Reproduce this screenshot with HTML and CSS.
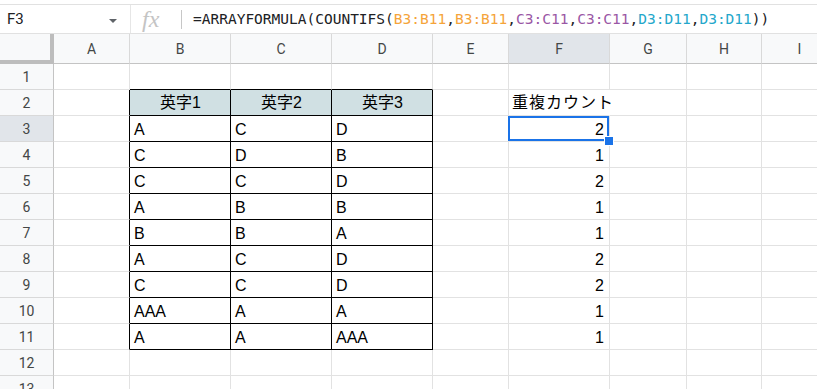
FILE: index.html
```html
<!DOCTYPE html>
<html lang="ja">
<head>
  <meta charset="UTF-8">
  <title>重複カウント</title>
  <link rel="stylesheet" href="styles.css">
</head>
<body>
  <div class="formula-bar">
    <div class="name-box">
      <span class="cell-ref">F3</span>
      <span class="caret"></span>
    </div>
    <div class="divider full"></div>
    <div class="fx">fx</div>
    <div class="divider"></div>
    <div class="formula">=ARRAYFORMULA(COUNTIFS(<span class="rng-b">B3:B11</span>,<span class="rng-b">B3:B11</span>,<span class="rng-c">C3:C11</span>,<span class="rng-c">C3:C11</span>,<span class="rng-d">D3:D11</span>,<span class="rng-d">D3:D11</span>))</div>
  </div>

  <div class="sheet">
    <div class="corner"></div>
    <div class="col-head">A</div>
    <div class="col-head">B</div>
    <div class="col-head">C</div>
    <div class="col-head">D</div>
    <div class="col-head">E</div>
    <div class="col-head active">F</div>
    <div class="col-head">G</div>
    <div class="col-head">H</div>
    <div class="col-head">I</div>

    <!-- row 1 -->
    <div class="row-head">1</div>
    <div class="cell"></div>
    <div class="cell edge-b"></div>
    <div class="cell edge-b"></div>
    <div class="cell edge-b"></div>
    <div class="cell"></div>
    <div class="cell"></div>
    <div class="cell"></div>
    <div class="cell"></div>
    <div class="cell"></div>

    <!-- row 2 -->
    <div class="row-head">2</div>
    <div class="cell edge-r"></div>
    <div class="cell boxed head">英字1</div>
    <div class="cell boxed head">英字2</div>
    <div class="cell boxed head">英字3</div>
    <div class="cell"></div>
    <div class="cell spill">重複カウント</div>
    <div class="cell"></div>
    <div class="cell"></div>
    <div class="cell"></div>

    <!-- row 3 -->
    <div class="row-head active">3</div>
    <div class="cell edge-r"></div>
    <div class="cell boxed">A</div>
    <div class="cell boxed">C</div>
    <div class="cell boxed">D</div>
    <div class="cell"></div>
    <div class="cell num selected">2<span class="sel-box"><span class="sel-handle"></span></span></div>
    <div class="cell"></div>
    <div class="cell"></div>
    <div class="cell"></div>

    <!-- row 4 -->
    <div class="row-head">4</div>
    <div class="cell edge-r"></div>
    <div class="cell boxed">C</div>
    <div class="cell boxed">D</div>
    <div class="cell boxed">B</div>
    <div class="cell"></div>
    <div class="cell num">1</div>
    <div class="cell"></div>
    <div class="cell"></div>
    <div class="cell"></div>

    <!-- row 5 -->
    <div class="row-head">5</div>
    <div class="cell edge-r"></div>
    <div class="cell boxed">C</div>
    <div class="cell boxed">C</div>
    <div class="cell boxed">D</div>
    <div class="cell"></div>
    <div class="cell num">2</div>
    <div class="cell"></div>
    <div class="cell"></div>
    <div class="cell"></div>

    <!-- row 6 -->
    <div class="row-head">6</div>
    <div class="cell edge-r"></div>
    <div class="cell boxed">A</div>
    <div class="cell boxed">B</div>
    <div class="cell boxed">B</div>
    <div class="cell"></div>
    <div class="cell num">1</div>
    <div class="cell"></div>
    <div class="cell"></div>
    <div class="cell"></div>

    <!-- row 7 -->
    <div class="row-head">7</div>
    <div class="cell edge-r"></div>
    <div class="cell boxed">B</div>
    <div class="cell boxed">B</div>
    <div class="cell boxed">A</div>
    <div class="cell"></div>
    <div class="cell num">1</div>
    <div class="cell"></div>
    <div class="cell"></div>
    <div class="cell"></div>

    <!-- row 8 -->
    <div class="row-head">8</div>
    <div class="cell edge-r"></div>
    <div class="cell boxed">A</div>
    <div class="cell boxed">C</div>
    <div class="cell boxed">D</div>
    <div class="cell"></div>
    <div class="cell num">2</div>
    <div class="cell"></div>
    <div class="cell"></div>
    <div class="cell"></div>

    <!-- row 9 -->
    <div class="row-head">9</div>
    <div class="cell edge-r"></div>
    <div class="cell boxed">C</div>
    <div class="cell boxed">C</div>
    <div class="cell boxed">D</div>
    <div class="cell"></div>
    <div class="cell num">2</div>
    <div class="cell"></div>
    <div class="cell"></div>
    <div class="cell"></div>

    <!-- row 10 -->
    <div class="row-head">10</div>
    <div class="cell edge-r"></div>
    <div class="cell boxed">AAA</div>
    <div class="cell boxed">A</div>
    <div class="cell boxed">A</div>
    <div class="cell"></div>
    <div class="cell num">1</div>
    <div class="cell"></div>
    <div class="cell"></div>
    <div class="cell"></div>

    <!-- row 11 -->
    <div class="row-head">11</div>
    <div class="cell edge-r"></div>
    <div class="cell boxed">A</div>
    <div class="cell boxed">A</div>
    <div class="cell boxed">AAA</div>
    <div class="cell"></div>
    <div class="cell num">1</div>
    <div class="cell"></div>
    <div class="cell"></div>
    <div class="cell"></div>

    <!-- row 12 -->
    <div class="row-head">12</div>
    <div class="cell"></div>
    <div class="cell"></div>
    <div class="cell"></div>
    <div class="cell"></div>
    <div class="cell"></div>
    <div class="cell"></div>
    <div class="cell"></div>
    <div class="cell"></div>
    <div class="cell"></div>

    <!-- row 13 -->
    <div class="row-head">13</div>
    <div class="cell"></div>
    <div class="cell"></div>
    <div class="cell"></div>
    <div class="cell"></div>
    <div class="cell"></div>
    <div class="cell"></div>
    <div class="cell"></div>
    <div class="cell"></div>
    <div class="cell"></div>
  </div>
</body>
</html>
```

FILE: styles.css
```css
* {
  box-sizing: border-box;
}
html, body {
  margin: 0;
  padding: 0;
  background: #fff;
  overflow: hidden;
}
body {
  width: 817px;
  height: 389px;
  font-family: 'Liberation Sans', Arial, 'Noto Sans CJK JP', sans-serif;
}

/* formula bar */
.formula-bar {
  margin-top: 4px;
  height: 30px;
  display: flex;
  align-items: center;
  border-top: 1px solid #e1e1e1;
  border-bottom: 1px solid #e1e1e1;
}
.name-box {
  width: 130px;
  height: 100%;
  display: flex;
  align-items: center;
  padding-left: 7px;
}
.cell-ref {
  font-family: Roboto, 'Liberation Sans', sans-serif;
  font-size: 15px;
  color: #202124;
  flex: 1;
}
.caret {
  width: 0;
  height: 0;
  border-left: 4px solid transparent;
  border-right: 4px solid transparent;
  border-top: 4px solid #5f6368;
  margin: 3px 13px 0 0;
}
.divider {
  width: 1px;
  height: 19px;
  background: #c7c7c7;
}
.divider.full {
  height: 100%;
  background: #e6e6e6;
}
.fx {
  width: 50px;
  padding-left: 11px;
  font-family: 'Liberation Serif', serif;
  font-style: italic;
  font-size: 24px;
  line-height: 24px;
  color: #c4c4c4;
}
.formula {
  padding-left: 11px;
  font-family: 'DejaVu Sans Mono', monospace;
  font-size: 14.5px;
  color: #202124;
  white-space: nowrap;
}
.rng-b { color: #f5a43a; }
.rng-c { color: #9a57a5; }
.rng-d { color: #24a7cb; }

/* grid */
.sheet {
  display: grid;
  grid-template-columns: 54px 76px 101px 101px 101px 76px 101px 77px 75px 76px;
  grid-template-rows: 30px repeat(13, 26px);
}
.corner {
  background: #f8f9fa;
  border-right: 4px solid #bdbdbd;
  border-bottom: 4px solid #bdbdbd;
}
.col-head {
  background: #f8f9fa;
  border-right: 1px solid #d9d9d9;
  border-bottom: 1px solid #c4c4c4;
  display: flex;
  align-items: center;
  justify-content: center;
  font-family: Roboto, 'Liberation Sans', sans-serif;
  font-size: 14px;
  color: #444746;
}
.row-head {
  background: #f8f9fa;
  border-right: 1px solid #c4c4c4;
  border-bottom: 1px solid #d9d9d9;
  display: flex;
  align-items: center;
  justify-content: center;
  font-family: Roboto, 'Liberation Sans', sans-serif;
  font-size: 14px;
  color: #444746;
}
.col-head.active,
.row-head.active {
  background: #e1e5ea;
}
.cell {
  position: relative;
  border-right: 1px solid #e2e2e2;
  border-bottom: 1px solid #e2e2e2;
  display: flex;
  align-items: flex-end;
  padding: 0 3px 2px 4px;
  font-size: 16px;
  color: #000;
  white-space: nowrap;
}
.edge-r {
  border-right-color: #000;
}
.edge-b {
  border-bottom-color: #000;
}
.boxed {
  border-right-color: #000;
  border-bottom-color: #000;
}
.head {
  background: #d0e0e3;
  justify-content: center;
}
.spill {
  border-right-color: transparent;
  letter-spacing: 1px;
  padding-left: 3px;
  z-index: 1;
}
.num {
  justify-content: flex-end;
  padding-right: 5px;
}
.selected {
  z-index: 2;
}
.sel-box {
  position: absolute;
  top: 0;
  left: -1px;
  right: 0;
  bottom: 0;
  border: 2px solid #1a73e8;
}
.sel-handle {
  position: absolute;
  right: -7px;
  bottom: -7px;
  width: 10px;
  height: 10px;
  background: #1a73e8;
  border: 1px solid #fff;
}
```
